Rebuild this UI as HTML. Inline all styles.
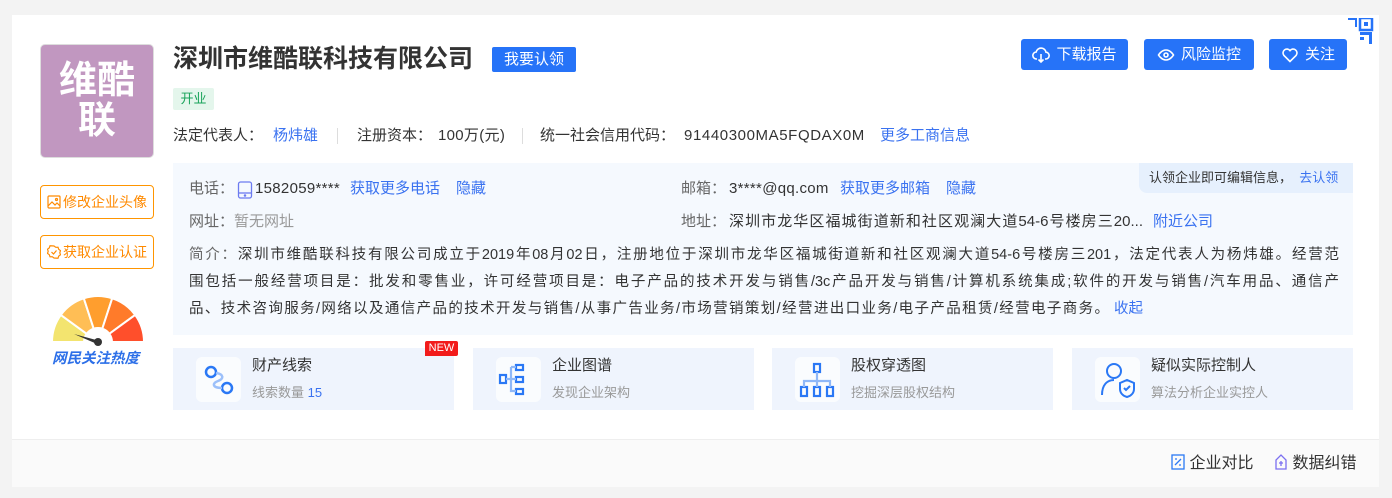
<!DOCTYPE html>
<html><head><meta charset="utf-8"><style>
*{margin:0;padding:0;box-sizing:border-box}
body{width:1392px;height:498px;background:#f3f3f3;font-family:"Liberation Sans","Noto Sans CJK SC",sans-serif;position:relative;overflow:hidden;color:#333}
.a{position:absolute;white-space:nowrap}
.card{position:absolute;left:12px;top:15px;width:1367px;height:472px;background:#fff;}
.foot{position:absolute;left:12px;top:439px;width:1367px;height:48px;background:#fafafa;border-top:1px solid #eee}
.blue{color:#3a72f0}
.btn{position:absolute;top:39px;height:31px;background:#2673f8;color:#fff;border-radius:3px;font-size:15px;line-height:31px;display:flex;align-items:center;justify-content:center;gap:6px}
.ob{position:absolute;left:40px;width:114px;height:34px;border:1px solid #ff9500;border-radius:4px;color:#ff8a00;font-size:14px;display:flex;align-items:center;justify-content:center;gap:2px}
.t14{font-size:14px;line-height:20px}
.t15{font-size:15px;line-height:20px}
.g{color:#666}
.fc{position:absolute;top:348px;width:281px;height:62px;background:#eff4fd}
.fc .ic{position:absolute;left:23px;top:9px;width:45px;height:45px;background:#fafcfe;border-radius:6px}
.fc .ti{position:absolute;left:79px;top:6px;font-size:15px;color:#333}
.fc .su{position:absolute;left:79px;top:34px;font-size:13px;color:#999}
.jl{position:absolute;left:189px;width:1150px;font-size:14.5px;line-height:27px;white-space:nowrap;text-align:justify;text-align-last:justify;color:#333}
</style></head><body>
<div class="card"></div>
<div class="foot"></div>

<div class="a" style="left:40px;top:44px;width:114px;height:114px;background:#c197c0;border:1px solid #ddd;border-radius:5px;color:#fff;font-weight:bold;font-size:38px;line-height:40px;text-align:center;padding-top:16px;white-space:normal">维酷<br>联</div>

<div class="a" style="left:173px;top:43px;font-size:25px;font-weight:bold;color:#333;line-height:32px">深圳市维酷联科技有限公司</div>
<div class="a" style="left:492px;top:47px;width:84px;height:25px;background:#2673f8;color:#fff;font-size:15px;line-height:25px;text-align:center;border-radius:2px">我要认领</div>
<div class="a" style="left:173px;top:88px;width:41px;height:22px;background:#e4f6ec;color:#19a35a;font-size:13px;line-height:22px;text-align:center;border-radius:2px">开业</div>

<div class="a t15" style="left:173px;top:126px">法定代表人：</div>
<div class="a t15 blue" style="left:273px;top:126px">杨炜雄</div>
<div class="a" style="left:337px;top:128px;width:1px;height:16px;background:#ddd"></div>
<div class="a t15" style="left:357px;top:126px">注册资本：</div>
<div class="a t15" style="left:438px;top:126px;letter-spacing:0.3px">100万(元)</div>
<div class="a" style="left:522px;top:128px;width:1px;height:16px;background:#ddd"></div>
<div class="a t15" style="left:540px;top:126px">统一社会信用代码：</div>
<div class="a t15" style="left:684px;top:126px;letter-spacing:0.6px">91440300MA5FQDAX0M</div>
<div class="a t15 blue" style="left:880px;top:126px">更多工商信息</div>

<!-- buttons -->
<div class="btn" style="left:1021px;width:107px"><svg width="18" height="18" viewBox="0 0 18 18" fill="none" stroke="#fff" stroke-width="1.6"><path d="M5 13H4.5a3.5 3.5 0 0 1-.3-7A5 5 0 0 1 14 6.2a3.4 3.4 0 0 1-.5 6.8H13"/><path d="M9 8v8M6.5 13.5 9 16l2.5-2.5"/></svg>下载报告</div>
<div class="btn" style="left:1144px;width:110px"><svg width="18" height="18" viewBox="0 0 18 18" fill="none" stroke="#fff" stroke-width="1.6"><path d="M1.5 9s3-5 7.5-5 7.5 5 7.5 5-3 5-7.5 5S1.5 9 1.5 9z"/><circle cx="9" cy="9" r="2"/></svg>风险监控</div>
<div class="btn" style="left:1269px;width:78px"><svg width="18" height="18" viewBox="0 0 18 18" fill="none" stroke="#fff" stroke-width="1.6"><path d="M9 15.5 2.8 9.3A3.7 3.7 0 0 1 9 4.6a3.7 3.7 0 0 1 6.2 4.7z"/></svg>关注</div>
<svg class="a" style="left:1348px;top:18px" width="27" height="27" viewBox="0 0 27 27"><path d="M0 0h9v9h-2v-7h-7z" fill="#2673f8"/><rect x="12" y="0" width="12" height="12" fill="none" stroke="#2673f8" stroke-width="2.5"/><rect x="16" y="4" width="4" height="4" fill="#2673f8"/><path d="M12 14h12v12h-3v-9h-9z" fill="#2673f8"/><rect x="12" y="19" width="4" height="3" fill="#2673f8"/></svg>

<!-- left buttons -->
<div class="ob" style="top:185px"><svg width="14" height="14" viewBox="0 0 14 14" fill="none" stroke="#ff8a00" stroke-width="1.2"><rect x="1" y="1" width="12" height="12" rx="1"/><path d="M1 11l4-4 3 3 2-2 3 3"/><circle cx="9.5" cy="4.5" r="1"/></svg>修改企业头像</div>
<div class="ob" style="top:235px"><svg width="14" height="14" viewBox="0 0 14 14" fill="none" stroke="#ff8a00" stroke-width="1.2"><path d="M7 1l1.8 1.3 2.2-.1.7 2.1 1.8 1.3-.7 2.1.7 2.1-1.8 1.3-.7 2.1-2.2-.1L7 13l-1.8-1.3-2.2.1-.7-2.1L.5 8.4l.7-2.1-.7-2.1 1.8-1.3.7-2.1 2.2.1z"/><path d="M4.5 7l2 2 3-3.5"/></svg>获取企业认证</div>

<!-- gauge -->
<svg class="a" style="left:50px;top:292px" width="96" height="54" viewBox="0 0 96 54">
<g stroke="#fff" stroke-width="2">
<path d="M2 50A46 46 0 0 1 10.8 22.9L36.7 41.8A14 14 0 0 0 34 50z" fill="#f3e46f"/>
<path d="M10.8 22.9A46 46 0 0 1 33.8 6.3L43.7 36.7A14 14 0 0 0 36.7 41.8z" fill="#ffbe55"/>
<path d="M33.8 6.3A46 46 0 0 1 62.2 6.3L52.3 36.7A14 14 0 0 0 43.7 36.7z" fill="#ff9e2e"/>
<path d="M62.2 6.3A46 46 0 0 1 85.2 22.9L59.3 41.8A14 14 0 0 0 52.3 36.7z" fill="#ff7b2a"/>
<path d="M85.2 22.9A46 46 0 0 1 94 50L62 50A14 14 0 0 0 59.3 41.8z" fill="#ff4f2b"/>
</g>
<path d="M24 42L48 48.5L47 52z" fill="#333"/>
<circle cx="48" cy="50" r="4" fill="#333"/>
</svg>
<div class="a" style="left:52px;top:347px;font-size:14.5px;font-weight:bold;font-style:italic;color:#2c6fe8">网民关注热度</div>

<!-- info panel -->
<div class="a" style="left:173px;top:163px;width:1180px;height:172px;background:#f5f9fe"></div>
<div class="a" style="left:1139px;top:163px;width:214px;height:30px;background:#e6f0fd;border-radius:0 0 0 8px;font-size:13px;line-height:30px;padding-left:10px;color:#333">认领企业即可编辑信息，&nbsp;&nbsp;<span class="blue">去认领</span></div>

<div class="a t15 g" style="left:189px;top:179px">电话：</div>
<svg class="a" style="left:237px;top:181px" width="16" height="18" viewBox="0 0 16 18" fill="none" stroke="#6c7bf0" stroke-width="1.3"><rect x="1.5" y="1" width="13" height="16" rx="2"/><path d="M1.5 12h13"/><circle cx="8" cy="14.5" r=".6"/></svg>
<div class="a t15" style="left:255px;top:179px;letter-spacing:0.3px">1582059****</div>
<div class="a t15 blue" style="left:350px;top:179px">获取更多电话</div>
<div class="a t15 blue" style="left:456px;top:179px">隐藏</div>
<div class="a t15 g" style="left:681px;top:179px">邮箱：</div>
<div class="a t15" style="left:729px;top:179px;letter-spacing:0.3px">3****@qq.com</div>
<div class="a t15 blue" style="left:840px;top:179px">获取更多邮箱</div>
<div class="a t15 blue" style="left:946px;top:179px">隐藏</div>
<div class="a t15" style="left:189px;top:212px"><span class="g">网址：</span><span style="color:#999">暂无网址</span></div>
<div class="a t15 g" style="left:681px;top:212px">地址：</div>
<div class="a t15" style="left:729px;top:212px;width:414px;text-align:justify;text-align-last:justify">深圳市龙华区福城街道新和社区观澜大道54-6号楼房三20...</div>
<div class="a t15 blue" style="left:1153px;top:212px">附近公司</div>

<div class="jl" style="top:242px"><span class="g">简介：</span>深圳市维酷联科技有限公司成立于2019年08月02日，注册地位于深圳市龙华区福城街道新和社区观澜大道54-6号楼房三201，法定代表人为杨炜雄。经营范</div>
<div class="jl" style="top:269px">围包括一般经营项目是：批发和零售业，许可经营项目是：电子产品的技术开发与销售/3c产品开发与销售/计算机系统集成;软件的开发与销售/汽车用品、通信产</div>
<div class="a" style="left:189px;top:296px;width:920px;font-size:14.5px;line-height:27px;color:#333;text-align:justify;text-align-last:justify">品、技术咨询服务/网络以及通信产品的技术开发与销售/从事广告业务/市场营销策划/经营进出口业务/电子产品租赁/经营电子商务。</div>
<div class="a blue" style="left:1114px;top:296px;font-size:14.5px;line-height:27px">收起</div>

<!-- feature cards -->
<div class="fc" style="left:173px"><div class="ic"><svg width="45" height="45" viewBox="0 0 45 45" fill="none" stroke="#2a78f5" stroke-width="2.5"><circle cx="15" cy="15" r="5"/><circle cx="31" cy="31" r="5"/><path d="M20 16c8 1 8 6 2 8s-6 7 4 7" stroke="#9cc0fa"/></svg></div><div class="ti">财产线索</div><div class="su">线索数量 <span class="blue">15</span></div></div>
<div class="a" style="left:425px;top:341px;width:33px;height:15px;background:#f21b1b;color:#fff;font-size:11px;line-height:15px;text-align:center;border-radius:2px 2px 2px 0">NEW</div>
<div class="fc" style="left:473px"><div class="ic"><svg width="45" height="45" viewBox="0 0 45 45" fill="none" stroke="#2a78f5" stroke-width="2.2"><rect x="4" y="18" width="6" height="8"/><rect x="20" y="8" width="7" height="5"/><rect x="20" y="20" width="7" height="5"/><rect x="20" y="32" width="7" height="5"/><path d="M10 22h5M15 10v24h5M15 10h5M15 22h5" stroke="#8fb8f8"/></svg></div><div class="ti">企业图谱</div><div class="su">发现企业架构</div></div>
<div class="fc" style="left:772px"><div class="ic"><svg width="45" height="45" viewBox="0 0 45 45" fill="none" stroke="#2a78f5" stroke-width="2.2"><rect x="19" y="7" width="6" height="8"/><rect x="6" y="30" width="6" height="9"/><rect x="19" y="30" width="6" height="9"/><rect x="32" y="30" width="6" height="9"/><path d="M22 15v8M9 30v-6h26v6M22 24v6" stroke="#8fb8f8"/></svg></div><div class="ti">股权穿透图</div><div class="su">挖掘深层股权结构</div></div>
<div class="fc" style="left:1072px"><div class="ic"><svg width="45" height="45" viewBox="0 0 45 45" fill="none" stroke="#2a78f5" stroke-width="2"><circle cx="19" cy="14" r="7"/><path d="M7 38c0-10 5-15 12-15"/><path d="M25 26l7-3 7 3v6c0 4-3 7-7 8-4-1-7-4-7-8z"/><path d="M29 31l2 2 4-4"/></svg></div><div class="ti">疑似实际控制人</div><div class="su">算法分析企业实控人</div></div>

<!-- footer -->
<div class="a" style="left:1171px;top:454px;font-size:16px;line-height:20px;color:#333"><svg width="14" height="16" viewBox="0 0 14 16" fill="none" stroke="#2a78f5" stroke-width="1.3" style="vertical-align:-2px"><rect x="1" y="1" width="12" height="14"/><path d="M4 5h2M8 11h2M4 11l6-6"/></svg> 企业对比</div>
<div class="a" style="left:1274px;top:454px;font-size:16px;line-height:20px;color:#333"><svg width="14" height="16" viewBox="0 0 14 16" fill="none" stroke="#7b6ff0" stroke-width="1.3" style="vertical-align:-2px"><path d="M2 15V6l5-5 5 5v9z"/><path d="M5 9h4M7 7v5"/></svg> 数据纠错</div>
</body></html>
